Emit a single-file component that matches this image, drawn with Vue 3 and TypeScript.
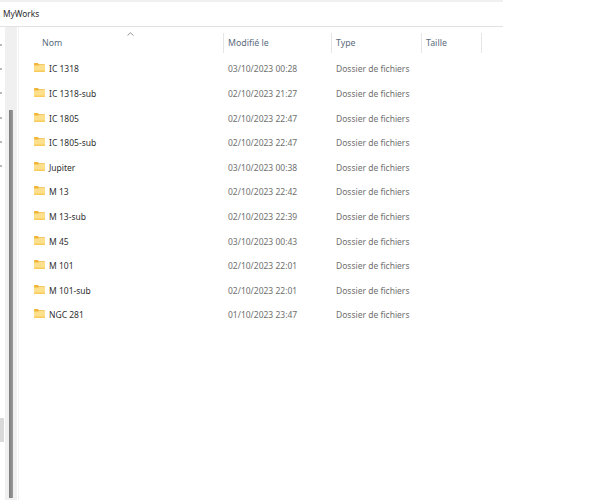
<script setup lang="ts">
interface FolderRow {
  name: string;
  modified: string;
}

const folders: FolderRow[] = [
  { name: "IC 1318", modified: "03/10/2023 00:28" },
  { name: "IC 1318-sub", modified: "02/10/2023 21:27" },
  { name: "IC 1805", modified: "02/10/2023 22:47" },
  { name: "IC 1805-sub", modified: "02/10/2023 22:47" },
  { name: "Jupiter", modified: "03/10/2023 00:38" },
  { name: "M 13", modified: "02/10/2023 22:42" },
  { name: "M 13-sub", modified: "02/10/2023 22:39" },
  { name: "M 45", modified: "03/10/2023 00:43" },
  { name: "M 101", modified: "02/10/2023 22:01" },
  { name: "M 101-sub", modified: "02/10/2023 22:01" },
  { name: "NGC 281", modified: "01/10/2023 23:47" },
];

const railDots = [0, 1, 2, 3, 4, 5];
</script>

<template>
  <div class="explorer">
    <div class="title-bar">MyWorks</div>
    <div class="body">
      <div class="rail">
        <span v-for="dot in railDots" :key="dot" class="rail-dot"></span>
        <span class="rail-selected"></span>
      </div>
      <div class="track"><div class="thumb"></div></div>
      <div class="list">
        <div class="head">
          <svg class="sort" width="7" height="4" viewBox="0 0 7 4">
            <path d="M0.5 3.5 L3.5 0.8 L6.5 3.5" fill="none" stroke="#77797c" stroke-width="0.8" />
          </svg>
          <div class="head-cell name-col">Nom</div>
          <div class="head-cell date-col">Modifié le</div>
          <div class="head-cell type-col">Type</div>
          <div class="head-cell size-col">Taille</div>
        </div>
        <div v-for="folder in folders" :key="folder.name" class="row">
          <div class="name-cell">
            <svg class="folder" width="11" height="9" viewBox="0 0 11 9">
              <path d="M0 0.7 Q0 0 0.7 0 H3.8 L5 1.2 H10.4 Q11 1.2 11 1.8 V3 H0 Z" fill="#f0b63a" />
              <path d="M0 2.6 H4.3 L5.2 2 H11 V8.4 Q11 9 10.4 9 H0.6 Q0 9 0 8.4 Z" fill="#fee08c" />
              <path d="M0 7.6 H11 V8.4 Q11 9 10.4 9 H0.6 Q0 9 0 8.4 Z" fill="#f8cb5c" />
            </svg>
            <span>{{ folder.name }}</span>
          </div>
          <div class="date-cell">{{ folder.modified }}</div>
          <div class="type-cell">Dossier de fichiers</div>
        </div>
      </div>
    </div>
  </div>
</template>

<style>
html,
body {
  background: #ffffff;
}
</style>

<style scoped>
.explorer {
  width: 503px;
  height: 500px;
  overflow: hidden;
  display: flex;
  flex-direction: column;
  font-family: "Noto Sans", "Open Sans", sans-serif;
  font-size: 8.5px;
  color: #3a3a3a;
}

.title-bar {
  height: 24px;
  padding-left: 3px;
  border-top: 2px solid #f0f0f0;
  border-bottom: 1px solid #e2e2e2;
  line-height: 24px;
  font-size: 8.3px;
  color: #2b2b2b;
}

.body {
  flex: 1;
  display: flex;
  min-height: 0;
}

.rail {
  position: relative;
  width: 5px;
  padding-top: 17px;
  display: flex;
  flex-direction: column;
  gap: 22.2px;
  flex-shrink: 0;
}

.rail-dot {
  width: 2px;
  height: 2px;
  background: #a0a0a0;
  border-radius: 50%;
}

.rail-selected {
  position: absolute;
  left: 0;
  top: 391px;
  width: 4px;
  height: 24px;
  background: #d9d9d9;
}

.track {
  box-sizing: border-box;
  width: 12px;
  padding: 83px 4px 2px;
  background: #f0f0f0;
  flex-shrink: 0;
}

.thumb {
  height: 100%;
  background: linear-gradient(90deg, #7c7c7c, #9a9a9a);
}

.list {
  flex: 1;
  margin-left: 1px;
  border-left: 1px solid #f2f2f2;
  padding-top: 6px;
  min-width: 0;
}

.head {
  position: relative;
  display: grid;
  grid-template-columns: 205px 108px 90px 60px;
  height: 20px;
  margin-bottom: 3.6px;
  color: #5b6b7c;
  font-size: 8.8px;
}

.sort {
  position: absolute;
  left: 108px;
  top: -1px;
}

.head-cell {
  line-height: 20px;
  padding-left: 4px;
  border-right: 1px solid #e5e5e5;
}

.head-cell.name-col {
  padding-left: 23px;
}

.row {
  display: grid;
  grid-template-columns: 205px 108px 90px;
  height: 24.6px;
  align-items: center;
}

.name-cell {
  display: flex;
  align-items: center;
  gap: 4px;
  padding-left: 15px;
  color: #303030;
}

.folder {
  margin-top: -2px;
  flex-shrink: 0;
}

.date-cell,
.type-cell {
  padding-left: 4px;
  color: #6f6f6f;
}
</style>
